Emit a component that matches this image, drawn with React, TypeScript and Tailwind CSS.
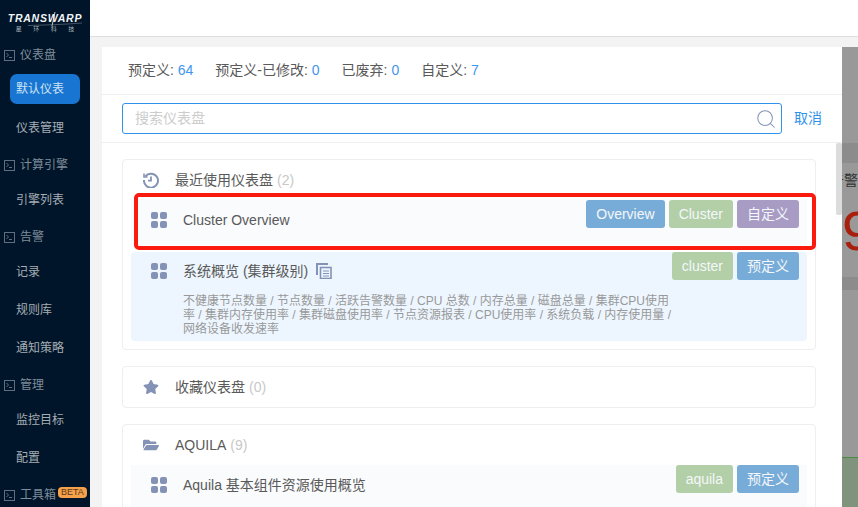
import { Search } from "lucide-react";
import { FaFolderOpen, FaStar } from "react-icons/fa";

const font = "font-['Liberation_Sans','Noto_Sans_CJK_SC',sans-serif]";

function TerminalIcon() {
  return (
    <svg width="11" height="11" viewBox="0 0 11 11" fill="none" stroke="#5f6f80" strokeWidth="1">
      <rect x="0.5" y="0.5" width="10" height="10" />
      <path d="M2.5 3 4.5 5 2.5 7M5 7.5h3" />
    </svg>
  );
}

function GridIcon() {
  return (
    <svg width="16" height="16" viewBox="0 0 16 16" fill="#8493b5">
      <rect x="0" y="0" width="7" height="7" rx="2" />
      <rect x="9" y="0" width="7" height="7" rx="2" />
      <rect x="0" y="9" width="7" height="7" rx="2" />
      <rect x="9" y="9" width="7" height="7" rx="2" />
    </svg>
  );
}

function CopyIcon() {
  return (
    <svg width="16" height="16" viewBox="0 0 16 16" fill="none" stroke="#8493b5" strokeWidth="1.6">
      <path d="M1 12V1h11" strokeWidth="2" />
      <rect x="4.5" y="4.5" width="10.5" height="11" fill="#edf6ff" />
      <path d="M7 8h6M7 10.5h6M7 13h6" strokeWidth="1" />
    </svg>
  );
}

function HistoryIcon() {
  return (
    <svg width="16" height="16" viewBox="0 0 16 16" fill="none" stroke="#8493b5" strokeWidth="2">
      <path d="M2.4 4.4A7 7 0 1 1 1 8" />
      <path d="M1 1.5V5h3.5" strokeWidth="1.6" />
      <path d="M8 4.5V8.6H5" strokeWidth="1.8" />
    </svg>
  );
}

function Logo() {
  return (
    <div className="relative flex h-[37px] flex-col items-center pt-[13px]">
      <div className="text-[10.5px] font-bold italic leading-[11px] tracking-[0.75px] whitespace-nowrap text-[#f2f4f6]">
        TRANSWARP
      </div>
      <div className="mt-[2px] flex gap-[11.5px] text-[6px] leading-[7px] text-[#aab2ba]">
        <span>星</span>
        <span>环</span>
        <span>科</span>
        <span>技</span>
      </div>
      <svg className="absolute top-[11px] left-[8px]" width="74" height="16" viewBox="0 0 74 16" fill="none">
        <path d="M44 15 47 1" stroke="#f2f4f6" strokeWidth="0.8" />
        <path d="M20 14.5C36 14 56 13.5 74 12" stroke="#8b96a1" strokeWidth="0.5" />
      </svg>
    </div>
  );
}

function NavSection({ label, beta }: { label: string; beta?: boolean }) {
  return (
    <div className="flex h-[34px] items-center pt-[2px] pl-[4px] text-[12px] text-[#7f8c99]">
      <TerminalIcon />
      <span className="ml-[5px]">{label}</span>
      {beta && (
        <span className="ml-[2px] -mt-[6px] rounded-[4px] bg-[#f5a04a] px-[3px] text-[9px] leading-[11px] text-[#5a3a1a]">
          BETA
        </span>
      )}
    </div>
  );
}

function NavItem({ label }: { label: string }) {
  return (
    <div className="flex h-[38px] items-center pl-[16px] text-[12px] text-[#a6adb4]">{label}</div>
  );
}

function Tag({ label, color }: { label: string; color: string }) {
  return (
    <span
      className={`flex h-[28px] shrink-0 items-center rounded-[3px] px-[10px] text-[14px] whitespace-nowrap text-[#f4f7fa] ${color}`}
    >
      {label}
    </span>
  );
}

function Stat({ label, value }: { label: string; value: number }) {
  return (
    <span>
      {label}: <span className="text-[#3f95f0]">{value}</span>
    </span>
  );
}

function Card({
  icon,
  title,
  count,
  className,
  children,
}: {
  icon: React.ReactNode;
  title: string;
  count: number;
  className?: string;
  children?: React.ReactNode;
}) {
  return (
    <div className={`rounded-[4px] border border-[#eeeeee] px-[8px] ${className ?? ""}`}>
      <div className="flex h-[40px] items-center pl-[12px] text-[14px] text-[#595959]">
        <span className="flex w-[16px]">{icon}</span>
        <span className="ml-[16px]">{title}</span>
        <span className="ml-[4px] text-[#c8c8c8]">({count})</span>
      </div>
      {children}
    </div>
  );
}

export default function App() {
  return (
    <div className={`flex h-[507px] w-[858px] overflow-hidden bg-white ${font}`}>
      {/* Sidebar */}
      <aside className="h-full w-[90px] shrink-0 bg-[#001529]">
        <Logo />
        <NavSection label="仪表盘" />
        <div className="mx-[10px] mt-[3px] mb-[5px] flex h-[30px] items-center rounded-[7px] bg-[#1876d2] pl-[6px] text-[12px] text-[#cfe2f3]">
          默认仪表
        </div>
        <NavItem label="仪表管理" />
        <NavSection label="计算引擎" />
        <NavItem label="引擎列表" />
        <NavSection label="告警" />
        <NavItem label="记录" />
        <NavItem label="规则库" />
        <NavItem label="通知策略" />
        <NavSection label="管理" />
        <NavItem label="监控目标" />
        <NavItem label="配置" />
        <NavSection label="工具箱" beta />
      </aside>

      <div className="flex min-w-0 flex-1 flex-col">
        <div className="h-[37px] shrink-0 border-b border-[#dedede] bg-white" />
        <div className="flex min-h-0 flex-1 bg-[#f3f3f3] pt-[10px] pl-[12px]">
          {/* Panel */}
          <div className="relative flex w-[740px] shrink-0 flex-col bg-white">
            <div className="flex h-[48px] shrink-0 items-center gap-[22px] border-b border-[#eeeeee] pl-[26px] text-[14px] text-[#595959]">
              <Stat label="预定义" value={64} />
              <Stat label="预定义-已修改" value={0} />
              <Stat label="已废弃" value={0} />
              <Stat label="自定义" value={7} />
            </div>
            <div className="flex h-[48px] shrink-0 items-center border-b border-[#eeeeee] pl-[20px]">
              <div className="flex h-[31px] w-[660px] items-center justify-between rounded-[3px] border border-[#2f93ec] pr-[4px] pl-[12px] text-[14px] text-[#cccccc]">
                <span>搜索仪表盘</span>
                <Search size={22} strokeWidth={1.1} className="text-[#8493b5]" />
              </div>
              <span className="ml-[12px] text-[14px] text-[#2f93ec]">取消</span>
            </div>

            <div className="relative min-h-0 flex-1 overflow-hidden pt-[16px] pl-[20px]">
              <div className="absolute top-0 right-0 h-[72px] w-[6px] rounded-[2px] bg-[#dcdcdc]" />
              <div className="flex w-[694px] flex-col gap-[16px]">
                <Card icon={<HistoryIcon />} title="最近使用仪表盘" count={2} className="pb-[8px]">
                  <div className="-mt-[1px] flex h-[46px] items-start justify-between bg-[#f9fbfd] pr-[8px] pl-[20px]">
                    <div className="flex h-[42px] items-center text-[14px] text-[#595959]">
                      <GridIcon />
                      <span className="ml-[16px]">Cluster Overview</span>
                    </div>
                    <div className="mt-[1px] flex gap-[4px]">
                      <Tag label="Overview" color="bg-[#78acd8]" />
                      <Tag label="Cluster" color="bg-[#b2cfa7]" />
                      <Tag label="自定义" color="bg-[#a89cc5]" />
                    </div>
                  </div>
                  <div className="mt-[7px] flex h-[89px] justify-between rounded-[4px] bg-[#edf6ff] pr-[8px] pl-[20px]">
                    <div className="w-[520px]">
                      <div className="flex h-[38px] items-center text-[14px] text-[#595959]">
                        <GridIcon />
                        <span className="ml-[16px]">系统概览 (集群级别)</span>
                        <span className="ml-[8px] flex">
                          <CopyIcon />
                        </span>
                      </div>
                      <p className="mt-[4px] ml-[32px] w-[492px] text-[12px] leading-[14px] text-[#999999]">
                        不健康节点数量 / 节点数量 / 活跃告警数量 / CPU 总数 / 内存总量 / 磁盘总量 / 集群CPU使用率 /
                        集群内存使用率 / 集群磁盘使用率 / 节点资源报表 / CPU使用率 / 系统负载 / 内存使用量 /
                        网络设备收发速率
                      </p>
                    </div>
                    <div className="flex h-[28px] gap-[4px]">
                      <Tag label="cluster" color="bg-[#b2cfa7]" />
                      <Tag label="预定义" color="bg-[#78acd8]" />
                    </div>
                  </div>
                </Card>

                <Card icon={<FaStar size={16} color="#8493b5" />} title="收藏仪表盘" count={0} />

                <Card icon={<FaFolderOpen size={16} color="#8493b5" />} title="AQUILA" count={9} className="pb-[8px]">
                  <div className="flex h-[46px] items-start justify-between bg-[#f9fbfd] pr-[8px] pl-[20px]">
                    <div className="flex h-[40px] items-center text-[14px] text-[#595959]">
                      <GridIcon />
                      <span className="ml-[16px]">Aquila 基本组件资源使用概览</span>
                    </div>
                    <div className="flex gap-[4px]">
                      <Tag label="aquila" color="bg-[#b2cfa7]" />
                      <Tag label="预定义" color="bg-[#78acd8]" />
                    </div>
                  </div>
                </Card>
              </div>
            </div>

            {/* Red highlight drawn over the first row */}
            <div className="absolute top-[146px] left-[32px] h-[57px] w-[682px] rounded-[5px] border-[4px] border-[#fb1a0e]" />
          </div>

          {/* Dimmed page behind the drawer */}
          <div className="flex min-w-0 flex-1 -mt-[10px] flex-col">
            <div className="h-[10px] shrink-0 bg-[#f3f3f3]" />
            <div className="h-[96px] shrink-0 bg-[#999999]" />
            <div className="h-[20px] shrink-0 bg-[#8c8c8c]" />
            <div className="relative h-[114px] shrink-0 overflow-hidden bg-[#999999]">
              <span className="absolute top-[7px] -left-[12px] whitespace-nowrap text-[14px] text-[#333333]">告警</span>
              <span className="absolute top-[35px] left-0 text-[56px] leading-[66px] text-[#a8200d]">9</span>
            </div>
            <div className="h-[13px] shrink-0 bg-[#8c8c8c]" />
            <div className="h-[167px] shrink-0 bg-[#999999]" />
            <div className="min-h-0 flex-1 border-t border-[#4c8a40] bg-[#80937c]" />
          </div>
        </div>
      </div>
    </div>
  );
}
